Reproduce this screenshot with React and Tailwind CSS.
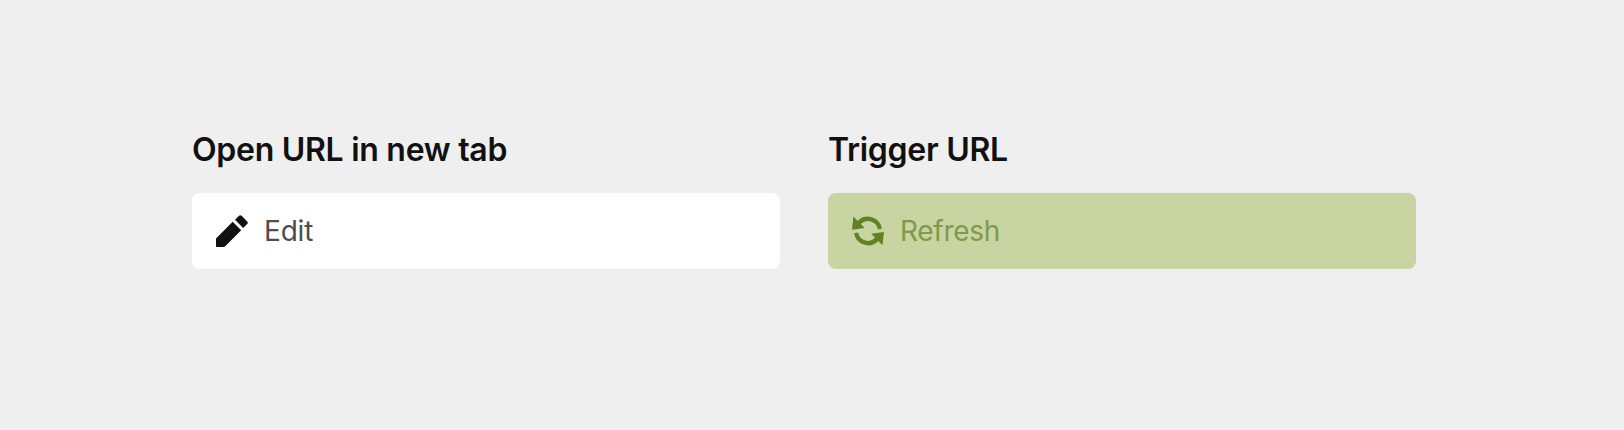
function PencilIcon() {
  return (
    <svg viewBox="0 0 32 32" className="size-8 shrink-0 fill-[#111]" aria-hidden="true">
      <path d="M16.7 6.8 25.2 15.3 9.2 31.3Q8.5 32 7.5 32H.8Q0 32 0 31.2V23.5Z" />
      <path d="M19 4.8 23 .8Q24.3-.4 25.6.8L31.2 6.4Q32.4 7.7 31.2 9L27.2 13Z" />
    </svg>
  );
}

function RefreshIcon() {
  return (
    <svg viewBox="0 0 32 32" className="size-8 shrink-0 fill-[#5f8223]" aria-hidden="true">
      <path d="M1.4 1.6 5.6 5.9A14.2 14.2 0 0 1 29.8 13.7L25.8 14.4A10 10 0 0 0 8.8 9.1L12.7 13.1 0 14.8Z" />
      <path d="M30.5 30.3 26.3 26A14.2 14.2 0 0 1 2.1 18.2L6.1 17.5A10 10 0 0 0 23.1 22.8L19.2 18.8 31.9 17.1Z" />
    </svg>
  );
}

export default function App() {
  return (
    <main className="grid h-[430px] w-full grid-cols-2 content-start gap-x-12 bg-[#efefef] pt-[130px] pr-[208px] pl-[192px] font-[Inter,sans-serif]">
      <section>
        <h2 className="h-[63px] text-[32px] leading-10 font-semibold tracking-[-0.28px] whitespace-nowrap text-[#111]">
          Open URL in new tab
        </h2>
        <button className="flex h-[76px] w-full items-center gap-4 rounded-lg bg-white px-6 text-[28px] text-[#4d4d4d]">
          <PencilIcon />
          <span className="tracking-[-0.2px]">Edit</span>
        </button>
      </section>
      <section>
        <h2 className="h-[63px] text-[32px] leading-10 font-semibold tracking-[-0.28px] whitespace-nowrap text-[#111]">
          Trigger URL
        </h2>
        <button className="flex h-[76px] w-full items-center gap-4 rounded-lg bg-[#c8d4a2] px-6 text-[28px] text-[#7f9a4a]">
          <RefreshIcon />
          <span className="tracking-[-0.3px]">Refresh</span>
        </button>
      </section>
    </main>
  );
}
